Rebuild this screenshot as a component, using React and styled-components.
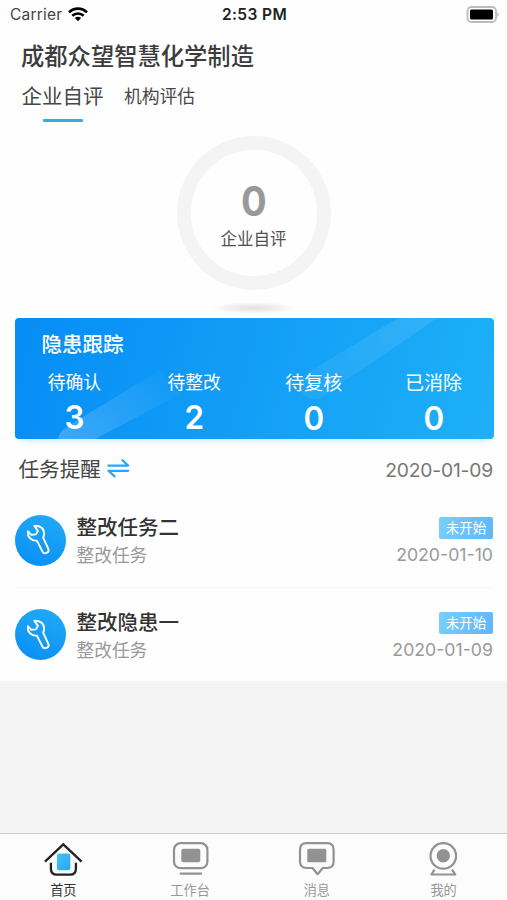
import React from 'react';
import styled, { createGlobalStyle } from 'styled-components';

const stats = [
  { label: '待确认', value: 3 },
  { label: '待整改', value: 2 },
  { label: '待复核', value: 0, large: true },
  { label: '已消除', value: 0, large: true },
];

const tasks = [
  { title: '整改任务二', type: '整改任务', status: '未开始', date: '2020-01-10' },
  { title: '整改隐患一', type: '整改任务', status: '未开始', date: '2020-01-09' },
];

const WifiIcon = () => (
  <svg width="20" height="15" viewBox="0 0 20 15" fill="none" stroke="#000" strokeWidth="2.6">
    <path d="M1 5.4C6 .4 14 .4 19 5.4" />
    <path d="M4.3 8.8c3.2-3.1 8.2-3.1 11.4 0" />
    <path d="M6.9 11.1c1.8-1.7 4.4-1.7 6.2 0L10 14.3z" fill="#000" stroke="none" />
  </svg>
);

const BatteryIcon = () => (
  <svg width="33" height="17" viewBox="0 0 33 17">
    <rect x="1.5" y="1" width="28.5" height="15" rx="4" fill="#fff" stroke="#bcbcbc" strokeWidth="1.8" />
    <rect x="4" y="3.4" width="23" height="10" rx="1.5" fill="#000" />
    <path d="M31.4 6.3c1.6.7 1.6 3.7 0 4.4z" fill="#aaa" />
  </svg>
);

const SwapIcon = () => (
  <svg width="23" height="19" viewBox="0 0 23 19" fill="none" stroke="#27a6f2" strokeWidth="2.2" strokeLinecap="round" strokeLinejoin="round">
    <path d="M1.3 6.6h19.8L15.5 1.2" />
    <path d="M21.2 11.8H1.5l6.1 5.6" />
  </svg>
);

const WrenchIcon = () => (
  <svg width="26" height="32" viewBox="0 0 26 32" fill="none" stroke="#fff" strokeWidth="1.9" strokeLinejoin="round" strokeLinecap="round">
    <path d="M7.4 1.9C12.8 1.3 17 4.6 17.100 9.200c0 1.800-.2 2.900-.9 4.400l5.100 11.300c1.500 3.900-4 6.100-5.900 2.600L9.900 16.600C4.800 17.200-.3 12.800.9 7.200l3.400 3.600 4.600-.4 2-3.500z" />
  </svg>
);

const HomeIcon = () => (
  <svg width="40" height="36" viewBox="0 0 40 36" fill="none" stroke="#222" strokeWidth="2.3">
    <defs>
      <linearGradient id="door" x1="0" y1="0" x2="1" y2="1">
        <stop offset="0" stopColor="#48c0fa" />
        <stop offset="1" stopColor="#27a8f5" />
      </linearGradient>
    </defs>
    <path d="M2 19.7 20.3 2.3l18.3 17.4" />
    <path d="M7.9 20.7v5.8c0 4 2 6.200 6 6.200h13c4 0 6-2.200 6-6.200v-5.800" />
    <rect x="13.9" y="11.500" width="13.400" height="16.700" rx="2.200" fill="url(#door)" stroke="none" />
  </svg>
);

const WorkIcon = () => (
  <svg width="40" height="36" viewBox="0 0 40 36" fill="none" stroke="#929292" strokeWidth="2.2">
    <rect x="4" y="1.2" width="33.4" height="25" rx="6.5" />
    <rect x="11.3" y="6.8" width="19" height="13.5" rx="2" fill="#929292" stroke="none" />
    <path d="M10.6 31.6h20.6" strokeWidth="2.3" strokeLinecap="round" />
  </svg>
);

const MessageIcon = () => (
  <svg width="40" height="36" viewBox="0 0 40 36" fill="none" stroke="#929292" strokeWidth="2.2" strokeLinejoin="round">
    <path d="M9.400 1.200h20.800c4 0 6.400 2.400 6.400 6.400v12c0 4-2.400 6.400-6.400 6.400h-4.400l-5.200 6.200-5.100-6.200H9.400C5.400 26 3 23.600 3 19.600v-12c0-4 2.400-6.400 6.400-6.400z" />
    <rect x="10.3" y="6.8" width="19" height="13.4" rx="1.5" fill="#929292" stroke="none" />
  </svg>
);

const ProfileIcon = () => (
  <svg width="40" height="36" viewBox="0 0 40 36" fill="none" stroke="#929292" strokeWidth="2.2" strokeLinejoin="round" strokeLinecap="round">
    <circle cx="19.3" cy="13.9" r="12.8" />
    <circle cx="19.3" cy="13.700" r="6.700" fill="#929292" stroke="none" />
    <path d="M10 28.300 7.400 32.500h23.800l-2.600-4.200" />
  </svg>
);

const CardShine = () => (
  <ShineSvg viewBox="0 0 479 121" preserveAspectRatio="none">
    <defs>
      <linearGradient id="shineLow" x1="50" y1="121" x2="160" y2="50" gradientUnits="userSpaceOnUse">
        <stop offset="0" stopColor="#fff" stopOpacity=".2" />
        <stop offset="1" stopColor="#fff" stopOpacity="0" />
      </linearGradient>
      <linearGradient id="shineHigh" x1="290" y1="85" x2="405" y2="0" gradientUnits="userSpaceOnUse">
        <stop offset="0" stopColor="#fff" stopOpacity=".05" />
        <stop offset="1" stopColor="#fff" stopOpacity=".1" />
      </linearGradient>
    </defs>
    <path d="M43 121c1-7 6-10 13-15l88-53 22 23-86 45z" fill="url(#shineLow)" />
    <path d="M291 56 365 11c9-6 15-9 22-11h35l-101 69-10 8c-14 10-34 0-20-21z" fill="url(#shineHigh)" />
  </ShineSvg>
);

const App = () => {
  return (
    <Screen>
      <GlobalStyle />
      <StatusBar>
        <Carrier>Carrier <WifiIcon /></Carrier>
        <Clock>2:53 PM</Clock>
        <Battery><BatteryIcon /></Battery>
      </StatusBar>

      <Title>成都众望智慧化学制造</Title>
      <Tabs>
        <Tab $active>企业自评</Tab>
        <Tab>机构评估</Tab>
      </Tabs>

      <Score>
        <Ring>
          <strong>0</strong>
          <span>企业自评</span>
        </Ring>
        <RingShadow />
      </Score>

      <TrackCard>
        <CardShine />
        <CardTitle>隐患跟踪</CardTitle>
        <Stats>
          {stats.map((stat) => (
            <Stat key={stat.label} $large={stat.large}>
              <span>{stat.label}</span>
              <b>{stat.value}</b>
            </Stat>
          ))}
        </Stats>
      </TrackCard>

      <TaskHeader>
        <h3>任务提醒</h3>
        <SwapIcon />
        <time>2020-01-09</time>
      </TaskHeader>
      <TaskList>
        {tasks.map((task) => (
          <TaskRow key={task.title}>
            <TaskIcon><WrenchIcon /></TaskIcon>
            <TaskInfo>
              <h4>{task.title}</h4>
              <p>{task.type}</p>
            </TaskInfo>
            <TaskMeta>
              <Badge>{task.status}</Badge>
              <time>{task.date}</time>
            </TaskMeta>
          </TaskRow>
        ))}
      </TaskList>

      <Filler />
      <TabBar>
        <TabItem $active><HomeIcon />首页</TabItem>
        <TabItem><WorkIcon />工作台</TabItem>
        <TabItem><MessageIcon />消息</TabItem>
        <TabItem><ProfileIcon />我的</TabItem>
      </TabBar>
    </Screen>
  );
};

export default App;


const GlobalStyle = createGlobalStyle`
  * {
    box-sizing: border-box;
  }

  body {
    margin: 0;
    font-family: Inter, "Noto Sans CJK SC", sans-serif;
  }

  h1, h2, h3, h4, p {
    margin: 0;
    font-weight: 400;
  }

  svg {
    display: block;
    flex-shrink: 0;
  }
`;

const Screen = styled.div`
  width: 100%;
  height: 900px;
  display: flex;
  flex-direction: column;
  overflow: hidden;
  background: #fefefe;
  white-space: nowrap;
`;

const StatusBar = styled.header`
  height: 28px;
  padding: 0 8px 0 10px;
  display: grid;
  grid-template-columns: 1fr auto 1fr;
  align-items: center;
  font-size: 15.5px;
  line-height: 26px;
  color: #222;
`;

const Carrier = styled.div`
  padding-top: 2px;
  display: flex;
  align-items: center;
  gap: 6px;
  color: #444;
  letter-spacing: 0.2px;

  svg {
    margin-top: -1px;
  }
`;

const Clock = styled.div`
  padding-top: 2px;
  font-weight: 600;
  letter-spacing: 0.4px;
`;

const Battery = styled.div`
  display: flex;
  justify-content: flex-end;
`;

const Title = styled.h1`
  height: 54px;
  padding-left: 21px;
  font-size: 23.3px;
  line-height: 57px;
  font-weight: 500;
  color: #3c3c3c;
`;

const Tabs = styled.nav`
  height: 41px;
  padding-left: 21.5px;
  display: flex;
  gap: 20.5px;
`;

const Tab = styled.div`
  display: flex;
  flex-direction: column;
  align-items: center;
  font-size: ${({ $active }) => ($active ? '20.5px' : '17.8px')};
  line-height: 30px;
  color: #484848;

  &::after {
    content: "";
    width: 40px;
    height: 3px;
    margin-top: 7px;
    border-radius: 1px;
    background: ${({ $active }) => ($active ? '#35aae6' : 'transparent')};
  }
`;

const Score = styled.section`
  height: 195px;
  padding-top: 13px;
  display: flex;
  flex-direction: column;
  align-items: center;
`;

const Ring = styled.div`
  width: 154px;
  height: 154px;
  border: 14px solid #f4f4f4;
  border-radius: 50%;
  display: flex;
  flex-direction: column;
  align-items: center;
  padding-top: 27px;

  strong {
    height: 48px;
    font-size: 41px;
    line-height: 48px;
    font-weight: 700;
    color: #999;
    transform: scaleX(0.93);
  }

  span {
    font-size: 16.5px;
    line-height: 28px;
    color: #505050;
  }
`;

const RingShadow = styled.div`
  width: 84px;
  height: 12px;
  margin-top: 12px;
  background: radial-gradient(closest-side, #e0e0e0, #efefef 55%, #fefefe);
`;

const TrackCard = styled.section`
  position: relative;
  height: 121px;
  margin: 0 13.5px 0 14.5px;
  flex-shrink: 0;
  border-radius: 4px;
  background: linear-gradient(105deg, #068df6, #1eb0f7);
  box-shadow: 0 7px 7px -6px rgba(38, 174, 247, 0.3);
  color: #fff;
`;

const ShineSvg = styled.svg`
  position: absolute;
  inset: 0;
  width: 100%;
  height: 100%;
`;

const CardTitle = styled.h2`
  position: relative;
  height: 50px;
  padding-left: 27px;
  font-size: 20.5px;
  line-height: 53px;
  font-weight: 500;
`;

const Stats = styled.div`
  position: relative;
  display: grid;
  grid-template-columns: repeat(4, 1fr);
`;

const Stat = styled.div`
  display: flex;
  flex-direction: column;
  align-items: center;

  span {
    font-size: ${({ $large }) => ($large ? '19px' : '17.8px')};
    line-height: ${({ $large }) => ($large ? '31px' : '29px')};
    height: 26px;
  }

  b {
    font-size: 33px;
    line-height: ${({ $large }) => ($large ? '49px' : '47px')};
    height: 45px;
    font-weight: 600;
    transform: scaleX(0.95);
  }
`;

const TaskHeader = styled.div`
  height: 54px;
  padding: 7px 14px 0 18.5px;
  display: flex;
  align-items: center;

  h3 {
    margin-right: 6px;
    font-size: 20.6px;
    line-height: 30px;
    color: #444;
  }

  svg {
    margin-top: -2px;
  }

  time {
    margin-left: auto;
    font-size: 19.3px;
    letter-spacing: -0.2px;
    color: #777;
  }
`;

const TaskList = styled.div`
  background: #fefefe;
`;

const TaskRow = styled.article`
  height: 94px;
  margin: 0 14px 0 14.5px;
  display: flex;
  align-items: center;

  & + & {
    border-top: 1.5px solid #f5f5f5;
  }
`;

const TaskIcon = styled.div`
  width: 51px;
  height: 51px;
  margin-right: 11px;
  padding-right: 1px;
  border-radius: 50%;
  display: flex;
  align-items: center;
  justify-content: center;
  background: linear-gradient(200deg, #23acf6, #078ef6);
`;

const TaskInfo = styled.div`
  padding-top: 3px;

  h4 {
    font-size: 20.5px;
    line-height: 28px;
    font-weight: 500;
    color: #333;
  }

  p {
    font-size: 17.7px;
    line-height: 27px;
    color: #999;
  }
`;

const TaskMeta = styled.div`
  margin-left: auto;
  padding-top: 3px;
  display: flex;
  flex-direction: column;
  align-items: flex-end;

  time {
    margin-top: 2px;
    font-size: 17.7px;
    line-height: 28px;
    color: #999;
  }
`;

const Badge = styled.span`
  width: 54px;
  height: 22px;
  margin-top: 3px;
  border-radius: 2px;
  background: linear-gradient(110deg, #79cffb, #61b4fb);
  color: #fff;
  font-size: 13.5px;
  line-height: 23px;
  text-align: center;
`;

const Filler = styled.div`
  flex: 1;
  background: #f3f3f3;
`;

const TabBar = styled.footer`
  height: 67px;
  flex-shrink: 0;
  border-top: 1.5px solid #ccc;
  background: #fcfcfc;
  display: grid;
  grid-template-columns: repeat(4, 1fr);
`;

const TabItem = styled.div`
  padding-top: 8px;
  display: flex;
  flex-direction: column;
  align-items: center;
  font-size: 13.2px;
  line-height: 24px;
  color: ${({ $active }) => ($active ? '#333' : '#999')};
`;
